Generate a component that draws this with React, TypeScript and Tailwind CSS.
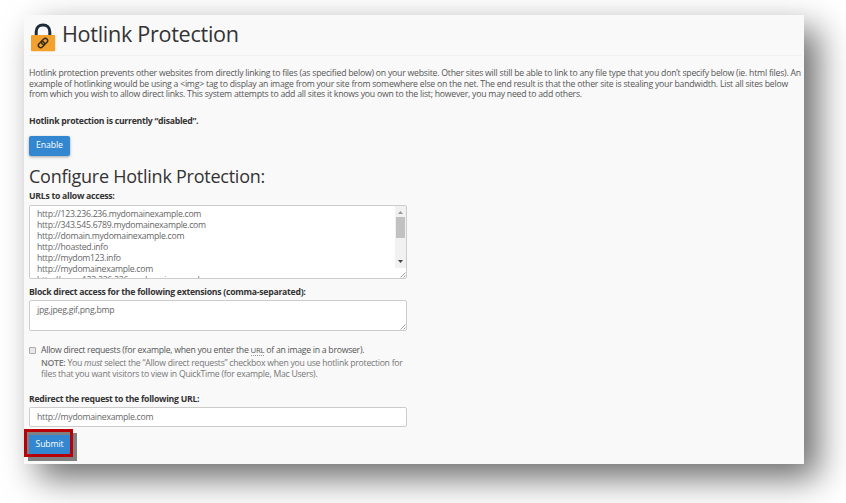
import clsx from "clsx";

const urls = [
    "http://123.236.236.mydomainexample.com",
    "http://343.545.6789.mydomainexample.com",
    "http://domain.mydomainexample.com",
    "http://hoasted.info",
    "http://mydom123.info",
    "http://mydomainexample.com",
    "http://www.123.236.236.mydomainexample.com",
];

const LockIcon = () => (
    <svg className="w-[25px] h-[29px] shrink-0" viewBox="0 0 25 29" fill="none">
        <path d="M5.2 13V8.8C5.2 4.8 8 2 12 2s6.8 2.8 6.8 6.8V13" stroke="#1c2b3a" strokeWidth="3" />
        <rect x="0" y="12" width="24.2" height="16.3" rx="1" fill="#f1a12c" />
        <g transform="rotate(-45 12 20)" stroke="#33291c" strokeWidth="1.4">
            <rect x="6.4" y="17.7" width="6.8" height="4.6" rx="2.3" />
            <rect x="10.8" y="17.7" width="6.8" height="4.6" rx="2.3" />
        </g>
    </svg>
);

const Grip = () => (
    <svg className="absolute right-0 bottom-0 w-[6px] h-[6px]" viewBox="0 0 6 6">
        <path d="M0.5 5.5L5.5 0.5M3.5 5.5L5.5 3.5" stroke="#888" strokeWidth="0.8" />
    </svg>
);

const Label = ({ children, className }: { children: React.ReactNode; className?: string }) => (
    <div className={clsx("font-bold text-[8.7px] leading-[12px] tracking-[-0.27px] text-[#333]", className)}>{children}</div>
);

const App = () => {
    return (
        <div className="w-[846px] h-[503px] overflow-hidden bg-white pl-[24px] pt-[15px] font-['Open_Sans',sans-serif]">
            <main className="w-[780px] h-[449px] bg-[#f9f9f9] pl-[5px] text-[8.7px] tracking-[-0.24px] text-[#555] whitespace-nowrap shadow-[14px_14px_32px_rgba(0,0,0,0.58)]">
                <header className="flex h-[41px] w-[773px] border-b border-[#f1f1f1] pt-[8px] pl-[2px]">
                    <LockIcon />
                    <h1 className="ml-[6px] -mt-[4px] text-[21.6px] leading-[30px] tracking-[-0.3px] text-[#333]">Hotlink Protection</h1>
                </header>

                <p className="pt-[12px] leading-[10.5px] tracking-[-0.235px]">
                    <span className="tracking-[-0.228px]">Hotlink protection prevents other websites from directly linking to files (as specified below) on your website. Other sites will still be able to link to any file type that you don’t specify below (ie. html files). An</span><br />
                    example of hotlinking would be using a &lt;img&gt; tag to display an image from your site from somewhere else on the net. The end result is that the other site is stealing your bandwidth. List all sites below<br />
                    from which you wish to allow direct links. This system attempts to add all sites it knows you own to the list; however, you may need to add others.
                </p>

                <Label className="mt-[15.5px]">Hotlink protection is currently “disabled”.</Label>
                <button className="mt-[9px] block h-[20px] w-[41px] rounded-[2px] bg-[#3287d0] text-[8.7px] tracking-[-0.1px] text-white shadow-[0_1px_3px_rgba(0,0,0,0.35)]">
                    Enable
                </button>

                <h2 className="mt-[8px] text-[18px] leading-[24px] tracking-[-0.25px] text-[#333]">Configure Hotlink Protection:</h2>
                <Label className="mt-[2px]">URLs to allow access:</Label>
                <div className="relative mt-[3px] flex h-[74px] w-[378px] overflow-hidden rounded-[2px] border border-[#ccc] bg-white">
                    <ul className="flex-1 pl-[7px] pt-[3px] leading-[11px] tracking-[-0.28px] text-[#666]">
                        {urls.map((url) => <li key={url}>{url}</li>)}
                    </ul>
                    <div className="flex h-[62px] w-[11px] flex-col items-center bg-[#f1f1f1]">
                        <svg className="w-[5px] h-[3px] mt-[5px] mb-[3px] shrink-0" viewBox="0 0 5 3"><path d="M0 3L2.5 0L5 3Z" fill="#999" /></svg>
                        <div className="h-[21px] w-[9px] shrink-0 bg-[#c1c1c1]" />
                        <svg className="w-[5px] h-[3px] mt-[22px] shrink-0" viewBox="0 0 5 3"><path d="M0 0L2.5 3L5 0Z" fill="#444" /></svg>
                    </div>
                    <Grip />
                </div>

                <Label className="mt-[7px]">Block direct access for the following extensions (comma-separated):</Label>
                <div className="relative mt-[2px] h-[31px] w-[378px] rounded-[2px] border border-[#ccc] bg-white pl-[7px] pt-[4px] leading-[11px] text-[#666]">
                    jpg,jpeg,gif,png,bmp
                    <Grip />
                </div>

                <div className="mt-[13px] flex">
                    <span className="mt-[3px] h-[7px] w-[7px] rounded-[1px] border border-[#aaa] bg-[#e8e8e8]" />
                    <div className="ml-[5px] tracking-[-0.265px]">
                        <p className="leading-[12px]">
                            Allow direct requests (for example, when you enter the <abbr className="border-b border-dotted border-[#999] text-[7.8px] leading-none no-underline">URL</abbr> of an image in a browser).
                        </p>
                        <p className="mt-[2px] leading-[10.5px] text-[#777]">
                            <b className="font-semibold">NOTE:</b> You <em>must</em> select the “Allow direct requests” checkbox when you use hotlink protection for<br />
                            files that you want visitors to view in QuickTime (for example, Mac Users).
                        </p>
                    </div>
                </div>

                <Label className="mt-[14px]">Redirect the request to the following URL:</Label>
                <div className="mt-[2px] h-[20px] w-[378px] rounded-[2px] border border-[#ccc] bg-white pl-[7px] leading-[18px] tracking-[-0.27px] text-[#666]">
                    http://mydomainexample.com
                </div>

                <div className="-ml-[5px] mt-[2px] h-[28px] w-[49px] border-[3px] border-[#b80009] bg-[#808080] pl-[2px] pt-[3px] shadow-[4px_4px_0_#808080]">
                    <button className="block h-[19px] w-[41px] bg-[#3287d0] pt-[1px] text-[8.7px] tracking-[-0.15px] text-white">Submit</button>
                </div>
            </main>
        </div>
    );
};

export default App;
